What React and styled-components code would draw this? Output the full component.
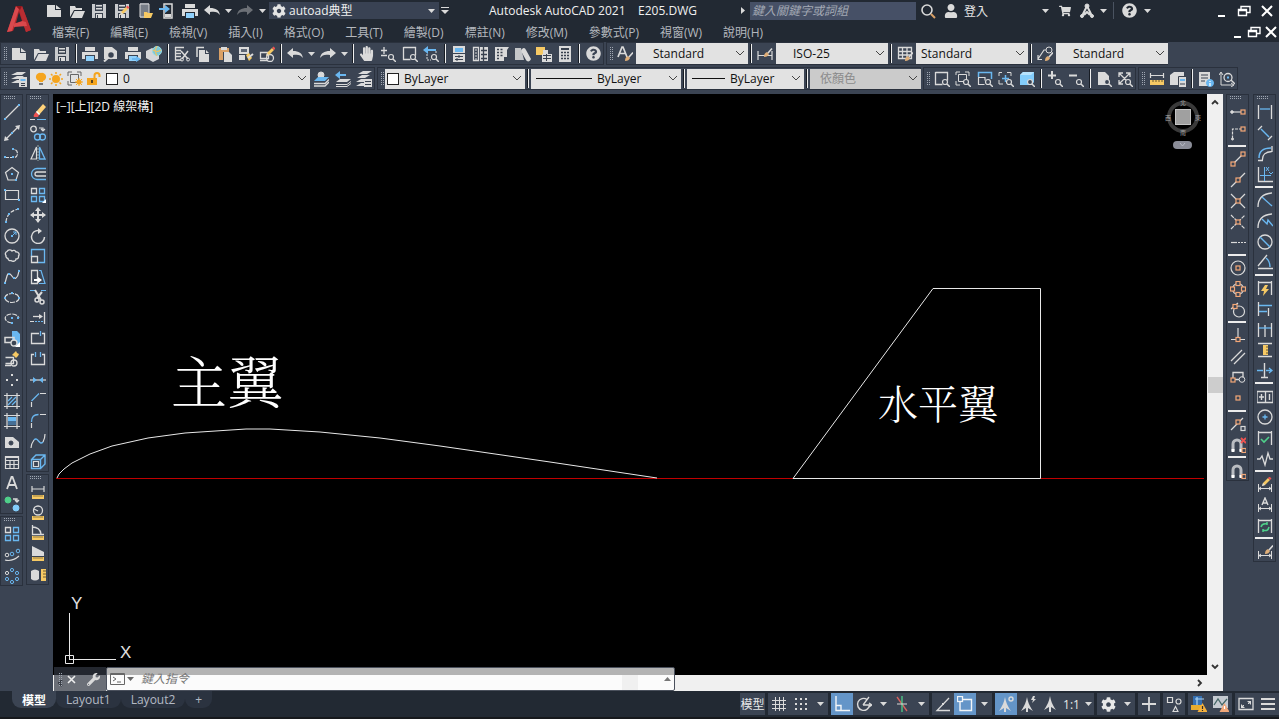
import React from "react";
import styled, { createGlobalStyle, css } from "styled-components";
import {
  FaCog,
  FaUser,
  FaWrench,
  FaHandPaper,
  FaShoppingCart,
  FaQuestionCircle,
} from "react-icons/fa";

const W = "#dadada";
const B = "#6ab7f0";
const Y = "#f6c964";
const O = "#f3a777";
const G = "#4fd08a";
const R = "#ef5350";

const GlobalStyle = createGlobalStyle`
  * {
    box-sizing: border-box;
  }
  body {
    margin: 0;
    background: #222933;
    overflow: hidden;
  }
  body, button, input, select {
    font-family: "Open Sans", "Noto Sans CJK TC", sans-serif;
    font-size: 12px;
  }
  button {
    border: 0;
    padding: 0;
    background: none;
    color: inherit;
  }
`;

/* ---------- icon primitives ---------- */

const Ln = ({ d, c = W, w = 1, dash }) => (
  <path d={d} fill="none" stroke={c} strokeWidth={w} strokeDasharray={dash} />
);
const Fl = ({ d, c = W }) => <path d={d} fill={c} />;
const Dot = ({ x, y, c = B }) => <rect x={x - 1} y={y - 1} width="2" height="2" fill={c} />;
const Node = ({ x, y, c = O }) => (
  <rect x={x - 2} y={y - 2} width="4" height="4" fill="#3b4453" stroke={c} strokeWidth="1.2" />
);
const Ci = ({ x, y, r, c = W, w = 1, f = "none", dash }) => (
  <circle cx={x} cy={y} r={r} fill={f} stroke={c} strokeWidth={w} strokeDasharray={dash} />
);
const Lens = ({ x = 11, y = 11, r = 2.5 }) => (
  <>
    <circle cx={x} cy={y} r={r} fill="#3b4453" stroke={W} strokeWidth="1.2" />
    <path d={`M${x + 2} ${y + 2}l3 3`} stroke={W} strokeWidth="1.5" />
  </>
);
const Brush = () => (
  <>
    <Fl d="M8 15c0-3 1-4 3-5l2 2c-1 2-2 3-5 3z" c="#dfae78" />
    <Ln d="M12 11l4-4.500" w={1.6} />
  </>
);
const Pencil = () => (
  <>
    <Fl d="M6 12l1-3 5-5 2 2-5 5z" c={Y} />
    <Fl d="M12 4l1.500-1.500 2 2L14 6z" c={R} />
    <Fl d="M6 12l1-3 2 2z" />
  </>
);
const Ruler = () => (
  <>
    <Fl d="M2 11h12v4H2z" c={Y} />
    <Ln d="M4 11v2M6 11v2M8 11v2M10 11v2M12 11v2" c="#6b5a30" w={0.7} />
  </>
);

const doc = <Fl d="M1 2h8v5h6v7H1zM10 2l5 4h-5z" />;
const printer = (
  <>
    <Fl d="M3 1h10v4H3z" />
    <Fl d="M0 6h16v7h-3V9H3v4H0z" />
    <Fl d="M4 10h8v5H4z" c="#8fd0fb" />
  </>
);
const floppy = (
  <>
    <Fl d="M1 1h14v14H1z" c="#c9cbce" />
    <Fl d="M4 1h8v7H4zM4 10h8v5H4z" c="#39414e" />
    <Fl d="M5 2h6v1.500H5zM5 5h6v1.500H5zM5 11h6v4H5z" />
    <Ln d="M6.500 12v3" c="#39414e" />
  </>
);
const layers = (
  <>
    <Fl d="M5 8h11l-4 3H1z" />
    <Ln d="M1 13.500h11l4-3M1 15.500h11l4-3" />
  </>
);
const magnet = (
  <>
    <Ln d="M3 14V7a4 4 0 0 1 8 0v7" w={3} c="#b9bcc1" />
    <Fl d="M1.500 12h3v3h-3zM9.500 12h3v3h-3z" c="#fff" />
    <Node x={14} y={13.5} />
  </>
);
const dimBase = <Ln d="M1.500 7v8M14.500 7v8M2 11.500h12M4 10l-2 1.500 2 1.500M12 10l2 1.500-2 1.500" />;
const scaleArrow = <Fl d="M8 0c1 5 2 8 6 14l-5-3v5H7v-5l-5 3C6 8 7 5 8 0z" />;
const alert = (
  <>
    <Fl d="M11.500 7l5 9h-10z" c="#f5b13d" />
    <Ln d="M11.500 10v3M11.500 14v1" c="#2b2b2b" w={1.2} />
  </>
);
const cubes = (
  <>
    <Ln d="M1.500 1.500h5v5h-5z" w={1.3} />
    <Ln d="M9.500 1.500h5v5h-5zM1.500 9.500h5v5h-5zM9.500 9.500h5v5h-5z" w={1.3} c={B} />
  </>
);

const ICONS = {
  new: doc,
  open: <Fl d="M1 14V3h5l1 2h6v2H5L1 14zM5.500 8H16l-3 7H2z" />,
  save: floppy,
  saveAs: <>{floppy}<Pencil /></>,
  fromWeb: <><Fl d="M3 0h9v15H3z" c="#777d87" /><Ln d="M3 1h9v13H3z" /><Fl d="M7 9h3l1 1h5l-2 5H7z" c={Y} /></>,
  toWeb: <><Ln d="M5 1h8v14H5z" w={1.5} /><Fl d="M6 11h6v3H6z" /><Fl d="M0 5h6V2l5 4-5 4V7H0z" c={B} /></>,
  print: printer,
  undo: <Fl d="M0 7l6-5v3c6 0 9 2 10 7-2-3-5-4-10-3v3z" />,
  redo: <Fl d="M16 7l-6-5v3C4 5 1 7 0 12c2-3 5-4 10-3v3z" />,
  preview: <><Fl d="M1 1h8l5 4v8H1z" /><Ci x={8} y={9} r={3.5} f="#3b4453" w={1.5} /><Ln d="M5 12l-4 3.500" w={2} /></>,
  publish: <>{printer}<Fl d="M7 12h4v-2l5 3-5 3v-2H7z" c={B} /></>,
  globe: <><Fl d="M0 5l6-3 7 3v8l-6 3-7-4z" c="#d4d6d9" /><Ci x={11} y={5} r={4.5} f="#7cc8d9" c="#9adbe6" /><Ln d="M7 4q4 3 8 0M11 0q-3 5 0 10" c="#e9c46a" w={1.2} /></>,
  cut: <><Ln d="M1 1.500h9M1 4.500h6M1 7.500h6M1 10.500h6M1.500 1v13h6" w={1.3} /><Ln d="M7 5l7 8M14 5l-6 8" w={1.5} /><Ci x={8} y={13.500} r={1.5} /><Ci x={14} y={13.500} r={1.5} /></>,
  copyDoc: <><Ln d="M2 11V1.500h7" w={1.5} /><Fl d="M4 4h6v4h4v8H4zM11 4l3 3h-3z" /></>,
  paste: <><Fl d="M2 2h10v4H6v8H2z" c="#d9a066" /><Fl d="M4 1h6v3H4z" /><Fl d="M7 6h5l3 3v7H7z" /></>,
  match: <><Fl d="M1 1h10v7H1zM1 9h6v5H1z" /><Fl d="M3 3h6v3H3z" c="#5d6675" /><Fl d="M8 9l3-2 3 5-3 3z" c={Y} /><Ln d="M10 12l5-4" w={2} /></>,
  blockEdit: <><Ln d="M1.500 6.500h8v6h-8zM1 14.500h8" w={1.3} /><Ci x={11} y={12} r={3.500} w={1.3} /><g transform="translate(1 -2)"><Pencil /></g></>,
  plusMinusZoom: <><Ln d="M1 4.500h6M4 1v7M1 9.500h6" w={1.3} /><Lens x={11} y={11} /></>,
  zoomWin: <><Ln d="M1.500 1.500h12v8M1.500 1v12.500h7" w={1.3} /><Lens /></>,
  zoomPrev: <><Fl d="M0 4l5-4v3h8v2H5v3z" c={B} /><Ln d="M4 8v6h4M13 5v3" dash="2 1" /><Lens /></>,
  props: <><Fl d="M2 0h12v7H2zM2 8h12v8H2z" /><Fl d="M4 2h8v4H4z" c={B} /><Ln d="M4 10.500h8M4 13.500h8" c="#39414e" /><Ln d="M8 9v3M6 12v3" c="#39414e" /></>,
  designCenter: <><Ln d="M1.500 1.500h5v13h-5z" w={1.3} /><Ln d="M3 4h2M3 7h2M3 10h2M3 13h2" /><Fl d="M8 1h8v14H8z" /><Ln d="M9 4.500h6M9 8.500h6M9 12.500h6M11.500 1v14" c="#39414e" w={1.3} /></>,
  palettes: <><Fl d="M2 1h9v14H2z" /><Ln d="M4 3.500h2M4 6.500h2M4 9.500h2M4 12.500h2M7.500 3.500h2M7.500 6.500h2M7.500 9.500h2" c="#39414e" w={1.5} /><Fl d="M11 1h5l-2 3v7h-3z" /></>,
  sheetSet: <><Fl d="M0 2h6l3 12H0z" c="#c5c7ca" /><Fl d="M7 3c2-2 3-1 4 1l5 9c-1 3-4 3-5 1L6 5z" /></>,
  markup: <><Fl d="M0 1h9v8H0z" c={Y} /><Fl d="M7 4h5v4h4v8H6V8h1z" /><Ln d="M7 9.500h8M7 12.500h8M10.500 8v7" c="#39414e" /></>,
  calc: <><Fl d="M2 0h12v16H2z" /><Fl d="M4 2h8v2H4z" c="#39414e" /><Ln d="M4 6.500h8M4 9.500h8M4 12.500h8" c="#39414e" w={1.5} dash="2 1" /></>,
  textStyle: <><Ln d="M1 11L5 1h1l4 10M3 7.500h5" w={1.7} /><Brush /></>,
  dimStyle: <><Ln d="M1 5v9M15 5v9M1 9.500h14" w={1.2} /><g transform="translate(-1 -4)"><Brush /></g></>,
  tableStyle: <><Ln d="M1.500 1.500h13v11h-13zM1 5.500h13M1 9h13M5.500 1v11M10 1v11" w={1.3} /><Brush /></>,
  leaderStyle: <><Ci x={12} y={4} r={3} /><Ln d="M9 4H7l-6 9M1 9v4.500h4" w={1.2} /><Brush /></>,
  layerProps: <><Fl d="M6 1h9l-4 3H0zM6 5h7l-4 3H0zM6 9h3v3H0z" /><Fl d="M8 6h8v10H8z" /><Fl d="M9.500 8h5v2h-5z" c={B} /><Ln d="M10 12.500h4M10 14.500h4" c="#39414e" /></>,
  layerCurrent: <><Ci x={8} y={4} r={3} f={W} /><Fl d="M5 6h11l-4 4H1z" c={B} /><Ln d="M1 12.500h11l4-4M1 15h11l4-4" w={1.3} /></>,
  layerPrev: <>{layers}<Fl d="M0 4l5-4v3h6v2H5v3z" c={B} /></>,
  layerState: <><Fl d="M7 0h9l-5 3H2zM6 4h8l-5 3H1zM5 8h4v3H0zM5 12h3v3H0z" /><Fl d="M8 8h8v8H8z" /><Ln d="M9 10.500h6M9 13.500h6" c="#39414e" /></>,
  zoomDyn: <><Ln d="M3.500 3.500h8v7h-8zM1 4V1h4M10 1h4v4M1 10v4h4" /><Lens /></>,
  zoomScale: <><Ln d="M1.500 6V1.500h13V8" c={B} w={1.5} /><Ln d="M1.500 6.500v7h6M1 6.500h7v3" w={1.2} /><Lens /></>,
  zoomCenter: <><Ln d="M1 5V1.500h3M9 1.500h4V5M1 9v4h4" /><Ln d="M4 7.500h7M7.500 4v7" c={B} w={1.5} /><Lens /></>,
  zoomObj: <><Fl d="M1 4l3-3h11v10l-2 3H1z" c="#83cdfb" /><Fl d="M1 4l3-3h11l-3 3z" c="#b7e3fd" /><Lens /></>,
  zoomIn: <><Ln d="M1 4.500h8M5 0v8" w={2} /><Lens /></>,
  zoomOut: <><Ln d="M1 4.500h8" w={2} /><Lens /></>,
  zoomAll: <><Fl d="M2 1h7l4 4v9H2z" /><Lens /></>,
  zoomExt: <><Ln d="M2 2l11 11M13 2L2 13M2 6V2h4M9 2h4v4M2 9v4h4" w={1.3} /><Lens /></>,
  measure: <><Ln d="M1.500 2v5M14.500 2v5M2 4.500h12" w={1.2} /><Fl d="M1 9h14v5H1z" c={Y} /><Ln d="M4 9v2M7 9v2M10 9v2M13 9v2" c="#6b5a30" /></>,
  massProps: <><Fl d="M0 4l4-3h10v6H9v7H0z" /><Ln d="M8.500 5.500h8v10h-8z" c="#39414e" /><Fl d="M9 6h7v10H9z" /><Fl d="M10 8h5v2h-5z" c={B} /><Ln d="M10 13h5" c="#39414e" /></>,
  listProps: <><Fl d="M1 1h11v14H1z" /><Ln d="M3 4h7M3 7h7M3 10h4" c="#39414e" /><Ci x={12} y={12} r={3.5} f={B} c={B} /><Ln d="M12 10v1M12 12v3" c="#fff" w={1.3} /></>,
  locate: <><Ln d="M2 2v12h12M0 4l2-3 2 3M12 12l3 2-3 2" /><Ci x={9} y={6.500} r={4} w={1.3} /><Dot x={9} y={6.500} /><Ln d="M12 9l4 4" w={1.5} /></>,

  line: <><Ln d="M1 15L15 1" w={1.2} /><Dot x={1} y={15} /><Dot x={15} y={1} /></>,
  xline: <><Ln d="M2 14L14 2" w={1.2} /><Fl d="M0 16l1-5 4 4zM16 0l-1 5-4-4z" /><Dot x={8} y={8} /></>,
  pline: <><Ln d="M1 12.500h9a3.500 4 0 0 0 0-8" w={1.2} dash="4 1" /><Dot x={1} y={12} /><Dot x={9} y={12} /><Dot x={9} y={4} /></>,
  polygon: <><Ln d="M8 1.500l6.500 5-2.500 7.500H4L1.500 6.500z" w={1.2} /><Dot x={8} y={8} /><Dot x={12} y={14} /></>,
  rect: <><Ln d="M1.500 3.500h13v9h-13z" w={1.2} /><Dot x={1} y={3} /><Dot x={15} y={13} /></>,
  arc: <><Ln d="M2 15Q3 4 15 2" w={1.2} dash="4 1.500" /><Dot x={2} y={15} /><Dot x={5} y={7} /><Dot x={14} y={2} /></>,
  circle: <><Ci x={8} y={8} r={7} w={1.3} /><Dot x={8} y={8} /><Ln d="M8 8l4-4M9 4h3v3" c={B} /></>,
  cloud: <Ln d="M4 10.500a2.500 2.500 0 0 1-2-3A2.500 2.500 0 0 1 3 3.500a3 3 0 0 1 5-.500 2.500 2.500 0 0 1 4 1 2.500 2.500 0 0 1 2.500 4c.500 2-1 3-2.500 3 0 2-3 3-5 1.500-1.500.500-3-.500-3-2z" w={1.3} />,
  spline: <><Ln d="M1 14C3 8 3 3 6 5s3 6 6 4 2-4 3-8" w={1.2} /><Dot x={1} y={14} /><Dot x={5} y={5} /><Dot x={10} y={9} /><Dot x={15} y={2} /></>,
  ellipse: <><ellipse cx="8" cy="8" rx="7" ry="4.500" fill="none" stroke={W} strokeWidth="1.2" strokeDasharray="5 1" /><Dot x={8} y={3} /><Dot x={1} y={8} /><Dot x={15} y={8} /></>,
  ellArc: <><Ln d="M8 13C-1 12-1 4 8 4q5 0 7 4" w={1.2} dash="5 1" /><Dot x={8} y={8} /><Dot x={14} y={8} /><Dot x={8} y={13} /></>,
  insert: <><Fl d="M8 0h5l3 3v11H8z" c={B} /><Ln d="M1 6.500h9v5H1z" w={1.5} /><Ci x={10} y={12} r={3} w={1.3} f="#3b4453" /><Fl d="M16 11v5h-5z" c="#fff" /></>,
  makeBlock: <><Ln d="M1.500 6.500h8v6h-8M1 14.500h6" w={1.3} /><Ci x={10} y={12} r={3} w={1.3} /><Fl d="M12 0l1 2 2 1-1 2-2 2-2-2-2-1 2-2z" c={Y} /></>,
  point: <><Dot x={8} y={3} c={W} /><Dot x={3} y={8} c={W} /><Dot x={13} y={8} c={W} /><Dot x={8} y={13} c={W} /></>,
  hatch: <><Ln d="M3 0v16M13 0v16M0 2.500h16M0 13.500h16" w={1.2} /><Ln d="M4 8l4-4M4 12l8-8M8 12l4-4" c={B} w={1.3} /></>,
  gradient: <><Ln d="M3 0v16M13 0v16M0 2.500h16M0 13.500h16" w={1.2} /><Fl d="M4 4h8v4H4z" c={B} /><Fl d="M4 8h8v4H4z" c="#456f96" /></>,
  region: <><Fl d="M1 3h8l6 5v6H1z" /><Ci x={7} y={9} r={2} f="#3b4453" c="#3b4453" /></>,
  table: <Ln d="M1.500 2.500h13v12h-13zM1 3.500h13M1 6.500h13M1 10.500h13M6 6v8M10 6v8" w={1.2} />,
  text: <Ln d="M3 14L7.500 2h1L13 14M5 10h6" w={1.8} />,
  addSel: <><Ci x={4} y={4} r={3} f={G} c={G} /><Ci x={12} y={12} r={3} f="#83cdfb" c="#83cdfb" /><Ln d="M9 3h4v3M11 4l2 2 2-2" w={1.3} /></>,

  erase: <><Fl d="M6 8l7-8 3 3-7 8z" c="#ffd27a" /><Fl d="M6 8l3 3-1 2H4c-1-1 0-3 2-5z" c={R} /><Fl d="M6 8l1-1 3 3-1 1z" c="#fff" /><Ln d="M0 15.500h5" /><Ln d="M7 15.500h9" c={B} /></>,
  copy: <><Ci x={3.500} y={4} r={2.800} w={1.3} /><Ln d="M9 3h4v3M11 4l2 2 2-2" w={1.2} /><Ci x={7.500} y={12} r={3} c={B} w={1.3} /><Ci x={12.500} y={12} r={3} c={B} w={1.3} /></>,
  mirror: <><Ln d="M6.500 2v12H1z" w={1.2} /><Ln d="M9.500 2v12H15z" c={B} w={1.3} /><Ln d="M8 0v16" c="#99aaaa" dash="2 1" /></>,
  offset: <><Ln d="M16 2.500H7a5.500 5.500 0 0 0 0 11h9" c={B} w={1.3} /><Ln d="M16 6H7a2 2 0 0 0 0 4h9" w={1.3} /></>,
  array: <>{cubes}<Fl d="M16 12v4h-4z" c="#fff" /></>,
  rectArray: cubes,
  move: <><Ln d="M8 1v14M1 8h14" w={2} /><Fl d="M8 0l3 4H5zM8 16l3-4H5zM0 8l4-3v6zM16 8l-4-3v6z" /></>,
  rotate: <><Ln d="M9 2.500a6.500 6.500 0 1 0 5.500 6.500" w={1.5} /><Fl d="M8 0l4 3-4 3z" /></>,
  scale: <><Ln d="M1.500 9V1.500h13v13H8" c={B} w={1.3} /><Ln d="M1.500 8.500h6v6h-6z" w={1.3} /></>,
  stretch: <><Ln d="M1.500 1.500h6v13h-6z" w={1.3} /><Ln d="M9 1.500h2l4 13H9" c={B} w={1.2} /><Fl d="M4 10h4V8l4 3-4 3v-2H4z" c="#fff" /></>,
  trim: <><Ln d="M0 1.500h5M11 1.500h5" c={B} /><Ln d="M5 1l6 10M12 3L7 9" w={2} /><Ci x={7} y={11} r={2} w={1.5} /><Ci x={12} y={13} r={2} w={1.5} /></>,
  extend: <><Ln d="M14.500 2v12" w={1.3} /><Ln d="M3 6.500h6" w={1.3} /><Fl d="M9 4l4 2.500L9 9z" /><Ln d="M0 11.500h4" /><Ln d="M5 11.500h8" c={B} dash="2 1" /></>,
  breakPt: <><Ln d="M9 3.500H1.500v10h13v-10H12" w={1.3} /><Ln d="M10.500 1v5" c={B} w={1.3} /></>,
  breakLn: <><Ln d="M4 3.500H1.500v10h13v-10H12" w={1.3} /><Ln d="M5.500 1v5M10.500 1v5" c={B} w={1.3} /></>,
  join: <><Ln d="M0 8h16" w={1.2} /><Fl d="M3 5l4 3-4 3zM13 5L9 8l4 3z" c={B} /></>,
  chamfer: <><Ln d="M1.500 15V10M10 1.500h6" w={1.2} /><Ln d="M1.500 9L9 1.500" c={B} w={1.3} /></>,
  fillet: <><Ln d="M1.500 15V10M10 1.500h6" w={1.2} /><Ln d="M1.500 9q0-7.500 7-7.500" c={B} w={1.3} /></>,
  blend: <><Ln d="M1 15q0-4 3-8" w={1.2} /><Ln d="M4 7c4-4 5 6 9 2" c={B} w={1.4} /><Ln d="M13 9q2-4 2-8" w={1.2} /></>,
  explode: <><Ln d="M1.500 5.500h9v9h-9zM2 5l4-4h9v9l-4 4M10.500 5.500L15 1" c={B} w={1.4} /><Ln d="M3.500 7.500h5v5h-5z" w={1.2} /></>,
  dist: <><Ln d="M2 2v6M14 2v6M2 5h12" w={1.2} /><Ruler /></>,
  radius: <><Ci x={8} y={5.500} r={4.500} w={1.3} /><Ln d="M8 6L4 4" w={1.2} /><Ruler /></>,
  angle: <><Ln d="M2.500 0v9.500H14M2 2q8 0 9 7" w={1.3} /><Ruler /></>,
  area: <><Fl d="M2 0l12 6v4H2z" /><Ruler /></>,
  volume: <><Fl d="M1 4q4-3 8 0v8q-4 3-8 0z" /><Fl d="M11 2h5v12h-5z" c={Y} /><Ln d="M13 4h3M13 7h3M13 10h3" c="#6b5a30" /></>,
  pathArray: <><Ln d="M1 13q7 2 14-4" w={1.2} /><Ci x={3} y={8} r={1.8} /><Ci x={8} y={7} r={1.8} c={B} /><Ci x={14} y={4} r={1.8} c={B} /></>,
  polarArray: <><Ci x={8} y={2} r={1.6} c={B} /><Ci x={13} y={5} r={1.6} c={B} /><Ci x={13} y={11} r={1.6} c={B} /><Ci x={8} y={14} r={1.6} c={B} /><Ci x={3} y={11} r={1.6} c={B} /><Ci x={3} y={5} r={1.6} /></>,

  track: <><Ln d="M2 8h10" w={1.2} /><Ci x={2} y={8} r={1.3} f={W} /><Node x={13} y={8} /></>,
  from: <><Ln d="M12 4H2.500v9" w={1.2} dash="3 1" /><Ci x={2.500} y={14} r={1} f={W} /><Node x={13} y={4} /></>,
  endpoint: <><Ln d="M3 13L13 3" w={1.2} /><Node x={3} y={13} /><Node x={13} y={3} /></>,
  midpoint: <><Ln d="M1 15L15 1" w={1.2} /><Node x={8} y={8} /></>,
  intersect: <><Ln d="M1 1l14 14M1 15L15 1" w={1.2} /><Node x={8} y={8} /></>,
  apparent: <><Ln d="M1 1l14 14M1 15L15 1" w={1.2} dash="4 1" /><Node x={8} y={8} /></>,
  extension: <><Ln d="M1 8.500h6" w={1.2} /><Ln d="M8 8.500h8" w={1.2} dash="2 1" /></>,
  center: <><Ci x={8} y={8} r={7} w={1.2} /><Node x={8} y={8} /></>,
  quadrant: <><Ci x={8} y={8} r={5.500} w={1.2} /><Node x={8} y={2.500} /><Node x={13.500} y={8} /><Node x={8} y={13.500} /><Node x={2.500} y={8} /></>,
  tangent: <><Ci x={9} y={9.500} r={5.500} w={1.2} /><Ln d="M1 7l7-6" w={1.2} /><Node x={5} y={4.500} /></>,
  perp: <><Ln d="M8 0v12M1 11.500h14" w={1.2} /><Node x={8} y={11.500} /></>,
  parallel: <Ln d="M1 12L12 1M4 15L15 4" w={1.3} />,
  snapInsert: <><Ln d="M3 10V3.500h10v5M3 10.500h6" w={1.3} /><Ci x={12} y={10.500} r={2.800} /><Node x={3} y={11} /></>,
  nodeSnap: <Node x={8} y={8} />,
  nearest: <><Ln d="M1 14L13 2" w={1.2} /><Node x={8} y={6} /><Node x={13} y={12.500} c={W} /></>,
  snapNone: <>{magnet}<Ln d="M11 1l5 5M16 1l-5 5" c={R} w={1.8} /></>,
  snapSet: magnet,

  dimLinear: <><Ln d="M1.500 1v14M14.500 1v14" w={1.3} /><Ln d="M3 5h10" c={B} w={1.3} /></>,
  dimAligned: <><Ln d="M5 1L1 5M15 11l-4 4" w={1.3} /><Ln d="M4 4l8 8" c={B} w={1.5} /></>,
  dimArc: <><Ln d="M2 12Q2 2 14 2" c={B} w={1.5} /><Ln d="M5.500 14Q5 6 15 5.500M1 14.500h5M15 0v6" w={1.3} /></>,
  ordinate: <><Ln d="M1.500 0v14.500H16" w={1.3} /><Ln d="M7.500 0v14M3 8.500h11M9 0l3 4M12 0L9 4M12 5l2 2 2-2" c={B} /></>,
  dimRadius: <><Ln d="M1 15Q1 2 15 1" w={1.3} /><Ln d="M5 5l10 9" c={B} w={1.3} /></>,
  jogged: <><Ln d="M1 15Q1 2 15 1" w={1.3} /><Ln d="M5 6l5 5 1-4 5 6" c={B} w={1.4} /></>,
  diameter: <><Ci x={8} y={8} r={7} w={1.3} /><Ln d="M3 3l10 10" c={B} w={1.4} /></>,
  dimAngular: <><Ln d="M10 1L1 12M1 14.500h15" w={1.3} /><Ln d="M9 4q4 3 4 9" c={B} w={1.4} /></>,
  quickDim: <><Ln d="M1.500 1v14M14.500 1v14M2 2.500h12" w={1.3} /><Fl d="M8 5l-4 6h3l-1 5 6-7H9l2-4z" c={Y} /></>,
  baseline: <><Ln d="M1.500 1v14M11.500 7v8" w={1.3} /><Ln d="M2 4.500h13M2 10.500h8" c={B} w={1.4} /></>,
  contDim: <><Ln d="M1.500 1v14M8 3v12M14.500 1v14" w={1.3} /><Ln d="M2 6h12" c={B} w={1.3} /></>,
  dimSpace: <><Ln d="M1 1.500h14M1 14.500h14" w={1.4} /><Fl d="M6 3h5v10H6z" c={Y} /><Ln d="M9 5h2M9 8h2M9 11h2" c="#6b5a30" /></>,
  dimBreak: <><Ln d="M7.500 0v14M4 14.500h7" w={1.4} /><Ln d="M0 7.500h6M9 7.500h6M12 5l3 2.500-3 2.500" c={B} w={1.3} /></>,
  tolerance: <><Ln d="M0 2.500h16v11H0zM8.500 2v11" w={1.3} /><Ln d="M2 8h5M4.500 5v6M12.500 5v6" w={1.4} /></>,
  centerMark: <><Ci x={8} y={8} r={7} w={1.3} /><Ln d="M5.500 8h5M8 5.500v5" c={B} w={1.3} /></>,
  inspect: <><Ln d="M1.500 1v14M14.500 1v14M2 2.500h12" w={1.3} /><Ln d="M4 9l3 3 5-5" c={G} w={1.6} /></>,
  jogLine: <Ln d="M0 8h3l2-3 3 9 3-12 2 6h3" w={1.3} />,
  dimEdit: <>{dimBase}<g transform="translate(-1 -3)"><Pencil /></g></>,
  dimTextEdit: <>{dimBase}<Ln d="M5 8l3-7 3 7M6 6h4" w={1.4} /></>,
  dimUpdate: <><Ln d="M1.500 1v14M14.500 1v14M2 2.500h12" w={1.3} /><Ln d="M4 9q1-4 6-3M12 9q-1 5-6 3M10 4v3M6 14v-3" c={G} w={1.5} /></>,
  dimStyle2: <>{dimBase}<g transform="translate(0 -5)"><Brush /></g></>,

  grid: <Ln d="M4.500 1v14M8.500 1v14M12.500 1v14M1 4.500h14M1 8.500h14M1 12.500h14" />,
  snap: <>{[3, 8, 13].map((x) => [3, 8, 13].map((y) => <Dot key={x + "-" + y} x={x} y={y} c={W} />))}</>,
  ortho: <Ln d="M2 0v14.500h14M2 9.500h5v5" c="#f2f5f8" w={1.4} />,
  polar: <><Ln d="M11 3.500a6 6 0 1 0 2.500 5.500" w={1.4} /><Ln d="M7 9L13 1M7 9h9M13 7l3 2-3 2" w={1.3} /></>,
  iso: <><Ln d="M3 1l10 14" c="#d9625f" w={1.3} /><Ln d="M8 0v16" c={G} w={1.3} /><Ln d="M3 8h10" w={1} /></>,
  otrack: <><Ln d="M14 2L2 14.500h13" w={1.3} /><Dot x={8} y={8} c={W} /></>,
  osnap: <><Ln d="M3 3.500h11.500v11H3z" c="#f2f5f8" w={1.4} /><rect x="0.500" y="0.500" width="5" height="5" fill="#6495c8" stroke="#f2f5f8" strokeWidth="1.300" /></>,
  annoVis: <><g transform="translate(-1 1)">{scaleArrow}</g><Ci x={13} y={3} r={2} w={1.4} /></>,
  annoAuto: <><g transform="translate(-1 1)">{scaleArrow}</g><Fl d="M13 0l-2 4h2l-1 3 4-4h-2l1-3z" /></>,
  annoScale: scaleArrow,
  plus: <Ln d="M8 1v14M1 8h14" w={1.8} />,
  isolate: <><Ln d="M1.500 1.500h5v5h-5zM7 15.500l2.500-5 2.500 5z" w={1.2} /><Ci x={12.500} y={5.500} r={2.500} w={1.2} /></>,
  hardware: <><Fl d="M2 0h9v10H2z" c="#356fb0" /><Ln d="M4 3h9M6 1v8" c="#a9d4f5" w={1.2} /><Fl d="M0 9h12v5H0z" c="#e7ac2e" />{alert}</>,
  perf: <><Fl d="M0 0h15v12H0z" c="#c5cad1" /><Ln d="M1 9l4-6 4 6 5-6" c="#446666" w={1.3} /><Fl d="M11.500 7l5 9h-10z" c="#f0a779" /><Ln d="M11.500 10v3" c="#fff" w={1.2} /></>,
  clean: <><Ln d="M1 2.500h14v11H1z" w={1.3} /><Fl d="M9 5h4v4zM3 8v4h4z" /><Ln d="M4 11l2-2M10 8l2-2" /></>,
  menu: <Ln d="M1 3h14M1 8h14M1 13h14" w={2} />,

  search: <><Ci x={7} y={7} r={5} w={1.6} /><Ln d="M11 11l4 4" c="#d9a066" w={2} /></>,
  share: <><Ln d="M8 3L3 13M8 3l5 10M5 12l3-3 3 3" w={2} /><Ci x={8} y={3} r={2} f={W} /><Ci x={3} y={13} r={1.5} f={W} /><Ci x={13} y={13} r={1.5} f={W} /></>,
  minimize: <Ln d="M5 13h7" c="#fff" w={2} />,
  restore: <Ln d="M5 6.500V3.500h9v6h-3M2.500 6.500h8v6h-8zM2.500 7.500h8" c="#fff" w={1.4} />,
  close: <Ln d="M3 3l10 10M13 3L3 13" c="#fff" w={2} />,
};

const Icon = ({ name, size = 16 }) => (
  <svg width={size} height={size} viewBox="0 0 16 16" aria-hidden="true">
    {ICONS[name]}
  </svg>
);

const Caret = ({ color = W }) => (
  <svg width="7" height="4" viewBox="0 0 7 4" aria-hidden="true">
    <path d="M0 0h7L3.500 4z" fill={color} />
  </svg>
);

/* ---------- shared controls ---------- */

const center = css`
  display: flex;
  align-items: center;
  justify-content: center;
`;

const ToolButton = styled.button`
  ${center}
  flex: ${(p) => (p.$width ? `0 0 ${p.$width}px` : "1 1 0")};
  min-width: 0;
  min-height: 0;
  align-self: stretch;
  color: ${(p) => p.$color || W};
  opacity: ${(p) => (p.$dim ? 0.4 : 1)};
  svg {
    flex: none;
  }
`;

const Tool = ({ name, ...rest }) => (
  <ToolButton type="button" aria-label={name} {...rest}>
    <Icon name={name} />
  </ToolButton>
);

const CaretButton = ({ width = 11, ...rest }) => (
  <ToolButton type="button" aria-label="more" $width={width} {...rest}>
    <Caret />
  </ToolButton>
);

/* ---------- title bar ---------- */

const Page = styled.div`
  height: 100vh;
  display: grid;
  grid-template-rows: auto auto minmax(0, 1fr) auto;
  background: #3b4453;
  color: #e4e4e4;
`;

const Header = styled.header`
  display: grid;
  grid-template-columns: 43px minmax(0, 1fr);
  background: #222933;
`;

const AppButton = styled.button`
  ${center}
  padding: 0 5px 5px 0;
`;

const TitleRow = styled.div`
  display: flex;
  height: 21px;
  align-items: center;
`;

const IconGroup = styled.div`
  display: flex;
  align-self: stretch;
  flex: 0 0 ${(p) => p.$width}px;
`;

const Workspace = styled.label`
  display: flex;
  align-items: center;
  flex: 0 0 170px;
  height: 17px;
  padding: 0 4px 0 3px;
  background: #394253;
  select {
    flex: 1;
    appearance: none;
    border: 0;
    padding: 0 0 0 3px;
    background: none;
    color: #f0f0f0;
  }
`;

const Title = styled.h1`
  flex: 1;
  margin: 0;
  font-size: 12px;
  font-weight: 400;
  text-align: center;
  white-space: pre;
  color: #f0f0f0;
`;

const SearchInput = styled.input`
  flex: 0 0 166px;
  height: 18px;
  min-width: 0;
  border: 0;
  padding: 0 2px;
  background: #465066;
  color: #fff;
  &::placeholder {
    color: #a3a9b4;
    font-style: italic;
  }
`;

const Login = styled.button`
  display: flex;
  align-items: center;
  flex: 0 0 114px;
  gap: 6px;
  padding: 0 5px 0 4px;
  span {
    flex: 1;
    text-align: left;
  }
`;

const Divider = styled.div`
  width: 1px;
  height: 17px;
  margin: 0 5px;
  background: #4a5361;
`;

const WindowButtons = styled.div`
  display: flex;
  align-self: stretch;
  flex: 0 0 ${(p) => p.$width}px;
  margin-left: ${(p) => (p.$apart ? "54px" : "auto")};
`;

const MenuRow = styled.nav`
  display: flex;
  align-items: center;
  gap: 21px;
  height: 21px;
  padding-left: 9px;
  color: #b4b8be;
  button {
    white-space: nowrap;
  }
`;

/* ---------- toolbars ---------- */

const ToolbarArea = styled.div`
  display: flex;
  flex-direction: column;
  gap: 2px;
  padding-bottom: 4px;
`;

const ToolbarRow = styled.div`
  display: flex;
  gap: 2px;
  height: 23px;
`;

const Strip = styled.div`
  display: flex;
  align-items: center;
  box-shadow: inset 0 0 0 1px #2a313d;
`;

const Grip = styled.div`
  flex: none;
  width: ${(p) => (p.$wide ? 13 : 4)}px;
  height: ${(p) => (p.$wide ? 4 : 13)}px;
  margin: ${(p) => (p.$wide ? "2px 0 2px 3px" : "0 1px 0 3px")};
  background: conic-gradient(#a0a7b2 25%, transparent 0) 0 0 / 2px 2px;
`;

const Sep = styled.div`
  flex: none;
  width: 2px;
  height: 19px;
  margin: 0 2px;
  border-left: 1px solid #171c24;
  border-right: 1px solid #f0f0f0;
`;

const Combo = styled.label`
  display: flex;
  align-items: center;
  gap: 5px;
  flex: 0 0 ${(p) => p.$width}px;
  height: ${(p) => (p.$tall ? 21 : 20)}px;
  padding: 0 4px 0 ${(p) => p.$indent || 5}px;
  background: ${(p) => (p.$off ? "#cbcbcb" : "#e2e2e2")};
  color: #111;
  select {
    flex: 1;
    min-width: 0;
    appearance: none;
    border: 0;
    padding: 0;
    background: none;
    color: #111;
    opacity: 1;
  }
  select:disabled {
    color: #8b8b8b;
  }
`;

const Chevron = () => (
  <svg width="8" height="5" viewBox="0 0 8 5" aria-hidden="true">
    <path d="M0 0l4 4 4-4" fill="none" stroke="#444" />
  </svg>
);

const Swatch = styled.i`
  flex: none;
  width: 12px;
  height: 12px;
  border: 1px solid #222;
  background: #fff;
`;

const LineSample = styled.i`
  flex: 0 0 ${(p) => p.$width}px;
  height: 1px;
  background: #111;
`;

const Select = ({ label, value, children, disabled, ...rest }) => (
  <Combo {...rest} $off={disabled}>
    {children}
    <select aria-label={label} disabled={disabled}>
      <option>{value}</option>
    </select>
    <Chevron />
  </Combo>
);

const LayerMarks = () => (
  <svg width="66" height="16" viewBox="0 0 66 16" aria-hidden="true">
    <path d="M6 2a4 4 0 0 1 2 8v1H4v-1a4 4 0 0 1 2-8z" fill="#f5a51f" />
    <path d="M4 12h4v2H4z" fill="#777" />
    <circle cx="21" cy="8" r="4" fill="#f5a51f" />
    <path d="M21 1v2M21 13v2M14 8h2M26 8h2M16 3l1.500 1.500M24.500 11.500L26 13M16 13l1.500-1.500M24.500 4.500L26 3" stroke="#f5a51f" strokeWidth="1.500" />
    <path d="M35.500 3.500h8v8h-8zM33 5V1h4M42 1h4v4M33 10v4h4" fill="none" stroke="#666" />
    <circle cx="44" cy="11" r="2.500" fill="#f5a51f" />
    <path d="M44 7v8M40 11h8M41 8l6 6M47 8l-6 6" stroke="#f5a51f" />
    <path d="M52 7h10v7H52z" fill="#f5a51f" />
    <path d="M59.500 7V4.500a2.500 2.500 0 0 1 5 0V6" fill="none" stroke="#f5a51f" strokeWidth="2" />
    <path d="M57 9v3" stroke="#5a4520" strokeWidth="2" />
  </svg>
);

const Tools = ({ width, names }) => (
  <IconGroup $width={width}>
    {names.map((n) => (
      <Tool key={n} name={n} />
    ))}
  </IconGroup>
);

/* ---------- side palettes ---------- */

const Main = styled.main`
  display: grid;
  grid-template-columns: 53px minmax(0, 1fr) 56px;
  min-height: 0;
`;

const Side = styled.aside`
  display: flex;
  align-items: flex-start;
  gap: ${(p) => (p.$right ? 4 : 3)}px;
  padding-left: ${(p) => (p.$right ? 3 : 0)}px;
`;

const SideColumn = styled.div`
  display: flex;
  flex-direction: column;
  gap: 2px;
  flex: 0 0 23px;
`;

const Palette = styled.div`
  display: flex;
  flex-direction: column;
  box-shadow: inset 0 0 0 1px #2a313d;
`;

const PaletteTools = styled.div`
  display: flex;
  flex-direction: column;
  height: ${(p) => p.$height}px;
`;

const Bar = styled.hr`
  flex: none;
  width: 18px;
  height: 2px;
  margin: 1px 2px 2px;
  border: 0;
  background: #ececec;
`;

const VerticalPalette = ({ height, names }) => (
  <Palette>
    <Grip $wide />
    <PaletteTools $height={height}>
      {names.map((n, i) => (n === "|" ? <Bar key={i} /> : <Tool key={n} name={n} />))}
    </PaletteTools>
  </Palette>
);

/* ---------- drawing area ---------- */

const Viewport = styled.section`
  position: relative;
  display: grid;
  grid-template-columns: minmax(0, 1fr) 16px;
  grid-template-rows: minmax(0, 1fr) 16px;
  background: #f0f0f0;
`;

const Canvas = styled.div`
  position: relative;
  overflow: hidden;
  background: #000;
`;

const Drawing = styled.svg`
  display: block;
  width: 100%;
  height: 100%;
  fill: none;
  stroke: #e8e8e8;
  text {
    font-family: "Noto Serif CJK TC", "Noto Sans CJK TC", serif;
    font-weight: 300;
    fill: #fff;
    stroke: none;
  }
`;

const ViewLabel = styled.div`
  position: absolute;
  left: 3px;
  top: 4px;
  line-height: 18px;
  color: #f0f0f0;
`;

const Ucs = styled.svg`
  position: absolute;
  left: 8px;
  bottom: 8px;
  fill: none;
  stroke: #e8e8e8;
  text {
    font-family: "Liberation Sans", sans-serif;
    font-size: 17px;
    fill: #e0e0e0;
    stroke: none;
  }
`;

const ViewCube = styled.svg`
  position: absolute;
  right: 4px;
  top: 4px;
  text {
    font-family: "Noto Sans CJK TC", sans-serif;
    font-size: 6px;
    text-anchor: middle;
    fill: #a5a5a5;
  }
`;

const ScrollBar = styled.div`
  display: flex;
  flex-direction: ${(p) => (p.$vertical ? "column" : "row")};
  align-items: center;
  justify-content: space-between;
  background: #f0f0f0;
`;

const Thumb = styled.div`
  width: ${(p) => (p.$vertical ? 15 : 16)}px;
  height: 16px;
  background: #cdcdcd;
`;

const ArrowButton = styled.button`
  ${center}
  width: 16px;
  height: 16px;
`;

const ScrollArrow = ({ d, label }) => (
  <ArrowButton type="button" aria-label={label}>
    <svg width="8" height="8" viewBox="0 0 8 8" aria-hidden="true">
      <path d={d} fill="none" stroke="#333" strokeWidth="1.800" />
    </svg>
  </ArrowButton>
);

const CommandLine = styled.form`
  position: absolute;
  left: 1px;
  bottom: 0;
  width: 621px;
  height: 24px;
  display: flex;
`;

const CommandTools = styled.div`
  display: flex;
  align-items: center;
  flex: 0 0 52px;
  padding-left: 1px;
  background: rgba(50, 56, 67, 0.7);
  color: #eee;
`;

const CommandBox = styled.label`
  flex: 1;
  display: flex;
  align-items: center;
  gap: 2px;
  padding: 0 3px;
  border: 1px solid #4a505c;
  border-radius: 2px;
  background: rgba(255, 255, 255, 0.7);
  input {
    flex: 1;
    min-width: 0;
    border: 0;
    padding: 0 0 2px 5px;
    background: none;
    &::placeholder {
      color: #777;
      font-style: italic;
    }
  }
`;

/* ---------- status bar ---------- */

const StatusBar = styled.footer`
  display: flex;
  justify-content: space-between;
  height: 28px;
  background: #222933;
  border-bottom: 2px solid #16181c;
`;

const Tabs = styled.div`
  display: flex;
  padding-left: 12px;
`;

const Tab = styled.button`
  height: 17px;
  padding: 0 10px;
  border-radius: 0 0 9px 9px;
  background: ${(p) => (p.$active ? "#3b4453" : "#2b3340")};
  color: ${(p) => (p.$active ? "#fff" : "#b4bac4")};
  font-weight: ${(p) => (p.$active ? 700 : 400)};
`;

const StatusTools = styled.div`
  display: flex;
  gap: 3px;
  height: 22px;
  margin-top: 2px;
`;

const StatusGroup = styled.div`
  display: flex;
  background: #3b4453;
`;

const StatusButton = styled.button`
  ${center}
  gap: 5px;
  width: ${(p) => p.$width || 22}px;
  background: ${(p) => (p.$on ? "#6495c8" : "none")};
  color: #e8e8e8;
  white-space: nowrap;
`;

const Status = ({ name, ...rest }) => (
  <StatusButton type="button" aria-label={name} {...rest}>
    <Icon name={name} />
  </StatusButton>
);

const StatusCaret = ({ width = 16 }) => (
  <StatusButton type="button" aria-label="options" $width={width}>
    <Caret />
  </StatusButton>
);

const MENUS = [
  "檔案(F)", "編輯(E)", "檢視(V)", "插入(I)", "格式(O)", "工具(T)",
  "繪製(D)", "標註(N)", "修改(M)", "參數式(P)", "視窗(W)", "說明(H)",
];

function AppLogo() {
  return (
    <svg width="24" height="28" viewBox="0 0 24 28" aria-hidden="true">
      <path d="M9 1h6l9 24-5 2-3-8-7 0-3 7-6 1z" fill="#b3262b" />
      <path d="M9 1l3 3-7 22-5 1z" fill="#d94a4e" />
      <path d="M12 4l3-3 9 24-5 2z" fill="#b92d32" />
      <path d="M6 19l9-3 4 1 1 4-13 1z" fill="#d9484c" />
      <path d="M12 7l3 9-6 2z" fill="#222933" />
      <path d="M9 1h6l-2 4z" fill="#8c171c" />
    </svg>
  );
}

function TopHeader() {
  return (
    <Header>
      <AppButton type="button" aria-label="Application menu">
        <AppLogo />
      </AppButton>
      <div>
        <TitleRow>
          <Tools width={158} names={["new", "open", "save", "saveAs", "fromWeb", "toWeb", "print"]} />
          <Tool name="undo" $width={22} />
          <CaretButton />
          <Tool name="redo" $width={22} $dim />
          <CaretButton width={13} />
          <Workspace>
            <FaCog size={14} />
            <select aria-label="Workspace">
              <option>autoad典型</option>
            </select>
            <Caret />
          </Workspace>
          <ToolButton type="button" aria-label="Customize" $width={11}>
            <svg width="8" height="7" viewBox="0 0 8 7">
              <path d="M0 0h8v1H0zM0 3h8L4 7z" fill={W} />
            </svg>
          </ToolButton>
          <Title>{"Autodesk AutoCAD 2021    E205.DWG"}</Title>
          <ToolButton type="button" aria-label="Collapse" $width={14}>
            <svg width="4" height="7" viewBox="0 0 4 7">
              <path d="M0 0l4 3.500L0 7z" fill={W} />
            </svg>
          </ToolButton>
          <SearchInput type="search" aria-label="Search" placeholder="鍵入關鍵字或詞組" />
          <Tool name="search" $width={24} />
          <Login type="button">
            <FaUser size={14} color={W} />
            <span>登入</span>
            <Caret />
          </Login>
          <ToolButton type="button" aria-label="Store" $width={22}>
            <FaShoppingCart size={12} />
          </ToolButton>
          <Tool name="share" $width={22} />
          <CaretButton width={10} />
          <Divider />
          <ToolButton type="button" aria-label="Help" $width={20}>
            <FaQuestionCircle size={15} />
          </ToolButton>
          <CaretButton width={16} />
          <WindowButtons $width={70} $apart>
            <Tool name="minimize" />
            <Tool name="restore" />
            <Tool name="close" />
          </WindowButtons>
        </TitleRow>
        <MenuRow>
          {MENUS.map((m) => (
            <button type="button" key={m}>
              {m}
            </button>
          ))}
          <WindowButtons $width={51}>
            <Tool name="minimize" />
            <Tool name="restore" />
            <Tool name="close" />
          </WindowButtons>
        </MenuRow>
      </div>
    </Header>
  );
}

function Toolbars() {
  return (
    <ToolbarArea>
      <ToolbarRow>
        <Strip>
          <Grip />
          <Tools width={65} names={["new", "open", "save"]} />
          <Sep />
          <Tools width={86} names={["print", "preview", "publish", "globe"]} />
          <Sep />
          <Tools width={107} names={["cut", "copyDoc", "paste", "match", "blockEdit"]} />
          <Sep />
          <Tool name="undo" $width={22} />
          <CaretButton />
          <Tool name="redo" $width={22} />
          <CaretButton />
          <Sep />
          <IconGroup $width={86}>
            <ToolButton type="button" aria-label="Pan">
              <FaHandPaper size={15} />
            </ToolButton>
            <Tool name="plusMinusZoom" />
            <Tool name="zoomWin" />
            <Tool name="zoomPrev" />
          </IconGroup>
          <Sep />
          <Tools width={128} names={["props", "designCenter", "palettes", "sheetSet", "markup", "calc"]} />
          <Sep />
          <ToolButton type="button" aria-label="Help" $width={22}>
            <FaQuestionCircle size={15} />
          </ToolButton>
        </Strip>
        <Strip>
          <Grip />
          <Tool name="textStyle" $width={22} />
          <Select label="Text style" value="Standard" $width={112} $indent={17} $tall />
          <Sep />
          <Tool name="dimStyle" $width={22} />
          <Select label="Dimension style" value="ISO-25" $width={112} $indent={17} $tall />
          <Sep />
          <Tool name="tableStyle" $width={22} />
          <Select label="Table style" value="Standard" $width={112} $tall />
          <Sep />
          <Tool name="leaderStyle" $width={22} />
          <Select label="Leader style" value="Standard" $width={112} $indent={17} $tall />
        </Strip>
      </ToolbarRow>
      <ToolbarRow>
        <Strip>
          <Grip />
          <Tool name="layerProps" $width={22} />
          <Select label="Layer" value="0" $width={280}>
            <LayerMarks />
            <Swatch />
          </Select>
          <Tools width={65} names={["layerCurrent", "layerPrev", "layerState"]} />
        </Strip>
        <Strip>
          <Grip />
          <Select label="Color" value="ByLayer" $width={140} $indent={2}>
            <Swatch />
          </Select>
          <Sep />
          <Select label="Linetype" value="ByLayer" $width={150}>
            <LineSample $width={56} />
          </Select>
          <Sep />
          <Select label="Lineweight" value="ByLayer" $width={117}>
            <LineSample $width={33} />
          </Select>
          <Sep />
          <Select label="Plot style" value="依顏色" $width={111} $indent={10} disabled />
        </Strip>
        <Strip>
          <Grip />
          <Tools width={107} names={["zoomWin", "zoomDyn", "zoomScale", "zoomCenter", "zoomObj"]} />
          <Sep />
          <Tools width={43} names={["zoomIn", "zoomOut"]} />
          <Sep />
          <Tools width={43} names={["zoomAll", "zoomExt"]} />
        </Strip>
        <Strip>
          <Grip />
          <Tools width={43} names={["measure", "massProps"]} />
          <Sep />
          <Tools width={43} names={["listProps", "locate"]} />
        </Strip>
      </ToolbarRow>
    </ToolbarArea>
  );
}

const DRAW = [
  "line", "xline", "pline", "polygon", "rect", "arc", "circle", "cloud", "spline", "ellipse",
  "ellArc", "insert", "makeBlock", "point", "hatch", "gradient", "region", "table", "text", "addSel",
];
const MODIFY = [
  "erase", "copy", "mirror", "offset", "array", "move", "rotate", "scale", "stretch",
  "trim", "extend", "breakPt", "breakLn", "join", "chamfer", "fillet", "blend", "explode",
];
const SNAPS = [
  "track", "from", "|", "endpoint", "midpoint", "intersect", "apparent", "extension", "|",
  "center", "quadrant", "tangent", "|", "perp", "parallel", "snapInsert", "nodeSnap", "|",
  "nearest", "snapNone", "|", "snapSet",
];
const DIMS = [
  "dimLinear", "dimAligned", "dimArc", "ordinate", "|", "dimRadius", "jogged", "diameter",
  "dimAngular", "|", "quickDim", "baseline", "contDim", "dimSpace", "dimBreak", "|",
  "tolerance", "centerMark", "inspect", "jogLine", "|", "dimEdit", "dimTextEdit", "dimUpdate",
  "|", "dimStyle2",
];

function DrawingArea() {
  return (
    <Viewport>
      <Canvas>
        <Drawing aria-label="E205.DWG">
          <path d="M3 384.500h1148" stroke="#c00000" />
          <path d="M4 384l2-4 5-5 8-6 6-3 12-6 22-8 36-8 37-5 61-4h24l50 3 60 6 60 8 110 16 107 16" />
          <path d="M740 384.500L880 194.500h107.500v190z" />
          <text x="118" y="309" fontSize="56">主翼</text>
          <text x="825" y="325" fontSize="40">水平翼</text>
        </Drawing>
        <ViewLabel>[−][上][2D 線架構]</ViewLabel>
        <ViewCube width="40" height="56" viewBox="0 0 40 56" aria-label="ViewCube">
          <circle cx="20" cy="19" r="14" fill="none" stroke="#3a3a3a" strokeWidth="4" />
          <rect x="12.500" y="11.500" width="15" height="15" fill="#a0a0a0" stroke="#c4c4c4" />
          <text x="20" y="7">北</text>
          <text x="20" y="37">南</text>
          <text x="5" y="22">西</text>
          <text x="35" y="22">東</text>
          <rect x="10" y="43" width="19" height="8" rx="4" fill="#8b8d98" />
          <path d="M17 45l2.500 3 2.500-3" fill="none" stroke="#b8bac4" />
        </ViewCube>
        <Ucs width="76" height="76" viewBox="0 -6 76 76" aria-label="UCS">
          <path d="M8.500 16v46M8 62.500h47M4.500 58.500h8v8h-8z" />
          <text x="10" y="12">Y</text>
          <text x="59" y="61">X</text>
        </Ucs>
      </Canvas>
      <ScrollBar $vertical>
        <ScrollArrow label="Scroll up" d="M1 6l3-3 3 3" />
        <Thumb $vertical />
        <ScrollArrow label="Scroll down" d="M1 2l3 3 3-3" />
      </ScrollBar>
      <ScrollBar>
        <ScrollArrow label="Scroll left" d="M5 1L2 4l3 3" />
        <Thumb />
        <ScrollArrow label="Scroll right" d="M3 1l3 3-3 3" />
      </ScrollBar>
      <CommandLine onSubmit={(e) => e.preventDefault()}>
        <CommandTools>
          <Grip />
          <ToolButton type="button" aria-label="Close" $width={17}>
            <svg width="9" height="9" viewBox="0 0 9 9" aria-hidden="true">
              <path d="M1 1l7 7M8 1L1 8" stroke="#eee" strokeWidth="1.600" />
            </svg>
          </ToolButton>
          <ToolButton type="button" aria-label="Customize" $width={26}>
            <FaWrench size={13} />
          </ToolButton>
        </CommandTools>
        <CommandBox>
          <svg width="15" height="12" viewBox="0 0 15 12" aria-hidden="true">
            <path d="M.500 .500h14v11H.500zM.500 1.500h14M3 4l3 2-3 2M7 9h4" fill="none" stroke="#666" />
          </svg>
          <Caret color="#666" />
          <input aria-label="Command" placeholder="鍵入指令" />
          <svg width="7" height="4" viewBox="0 0 7 4" aria-hidden="true">
            <path d="M0 4h7L3.500 0z" fill="#777" />
          </svg>
        </CommandBox>
      </CommandLine>
    </Viewport>
  );
}

function Footer() {
  return (
    <StatusBar>
      <Tabs>
        <Tab type="button" $active>模型</Tab>
        <Tab type="button">Layout1</Tab>
        <Tab type="button">Layout2</Tab>
        <Tab type="button" aria-label="New layout">+</Tab>
      </Tabs>
      <StatusTools>
        <StatusGroup>
          <StatusButton type="button" $width={25}>模型</StatusButton>
        </StatusGroup>
        <StatusGroup>
          <Status name="grid" />
          <Status name="snap" />
          <StatusCaret />
        </StatusGroup>
        <StatusGroup>
          <Status name="ortho" $on />
          <Status name="polar" />
          <StatusCaret />
          <Status name="iso" />
          <StatusCaret />
        </StatusGroup>
        <StatusGroup>
          <Status name="otrack" />
          <Status name="osnap" $on />
          <StatusCaret />
        </StatusGroup>
        <StatusGroup>
          <Status name="annoVis" $on />
          <Status name="annoAuto" />
          <Status name="annoScale" />
          <StatusButton type="button" $width={33}>
            1:1 <Caret />
          </StatusButton>
        </StatusGroup>
        <StatusGroup>
          <StatusButton type="button" aria-label="Settings">
            <FaCog size={15} />
          </StatusButton>
          <StatusCaret />
        </StatusGroup>
        <StatusGroup>
          <Status name="plus" />
        </StatusGroup>
        <StatusGroup>
          <Status name="isolate" />
        </StatusGroup>
        <StatusGroup>
          <Status name="hardware" />
          <Status name="perf" />
        </StatusGroup>
        <StatusGroup>
          <Status name="clean" />
          <Status name="menu" />
        </StatusGroup>
      </StatusTools>
    </StatusBar>
  );
}

export default function App() {
  return (
    <Page>
      <GlobalStyle />
      <TopHeader />
      <Toolbars />
      <Main>
        <Side>
          <SideColumn>
            <VerticalPalette height={412} names={DRAW} />
            <VerticalPalette height={62} names={["rectArray", "pathArray", "polarArray"]} />
          </SideColumn>
          <SideColumn>
            <VerticalPalette height={370} names={MODIFY} />
            <VerticalPalette height={103} names={["dist", "radius", "angle", "area", "volume"]} />
          </SideColumn>
        </Side>
        <DrawingArea />
        <Side $right>
          <SideColumn>
            <VerticalPalette height={379} names={SNAPS} />
          </SideColumn>
          <SideColumn>
            <VerticalPalette height={460} names={DIMS} />
          </SideColumn>
        </Side>
      </Main>
      <Footer />
    </Page>
  );
}
